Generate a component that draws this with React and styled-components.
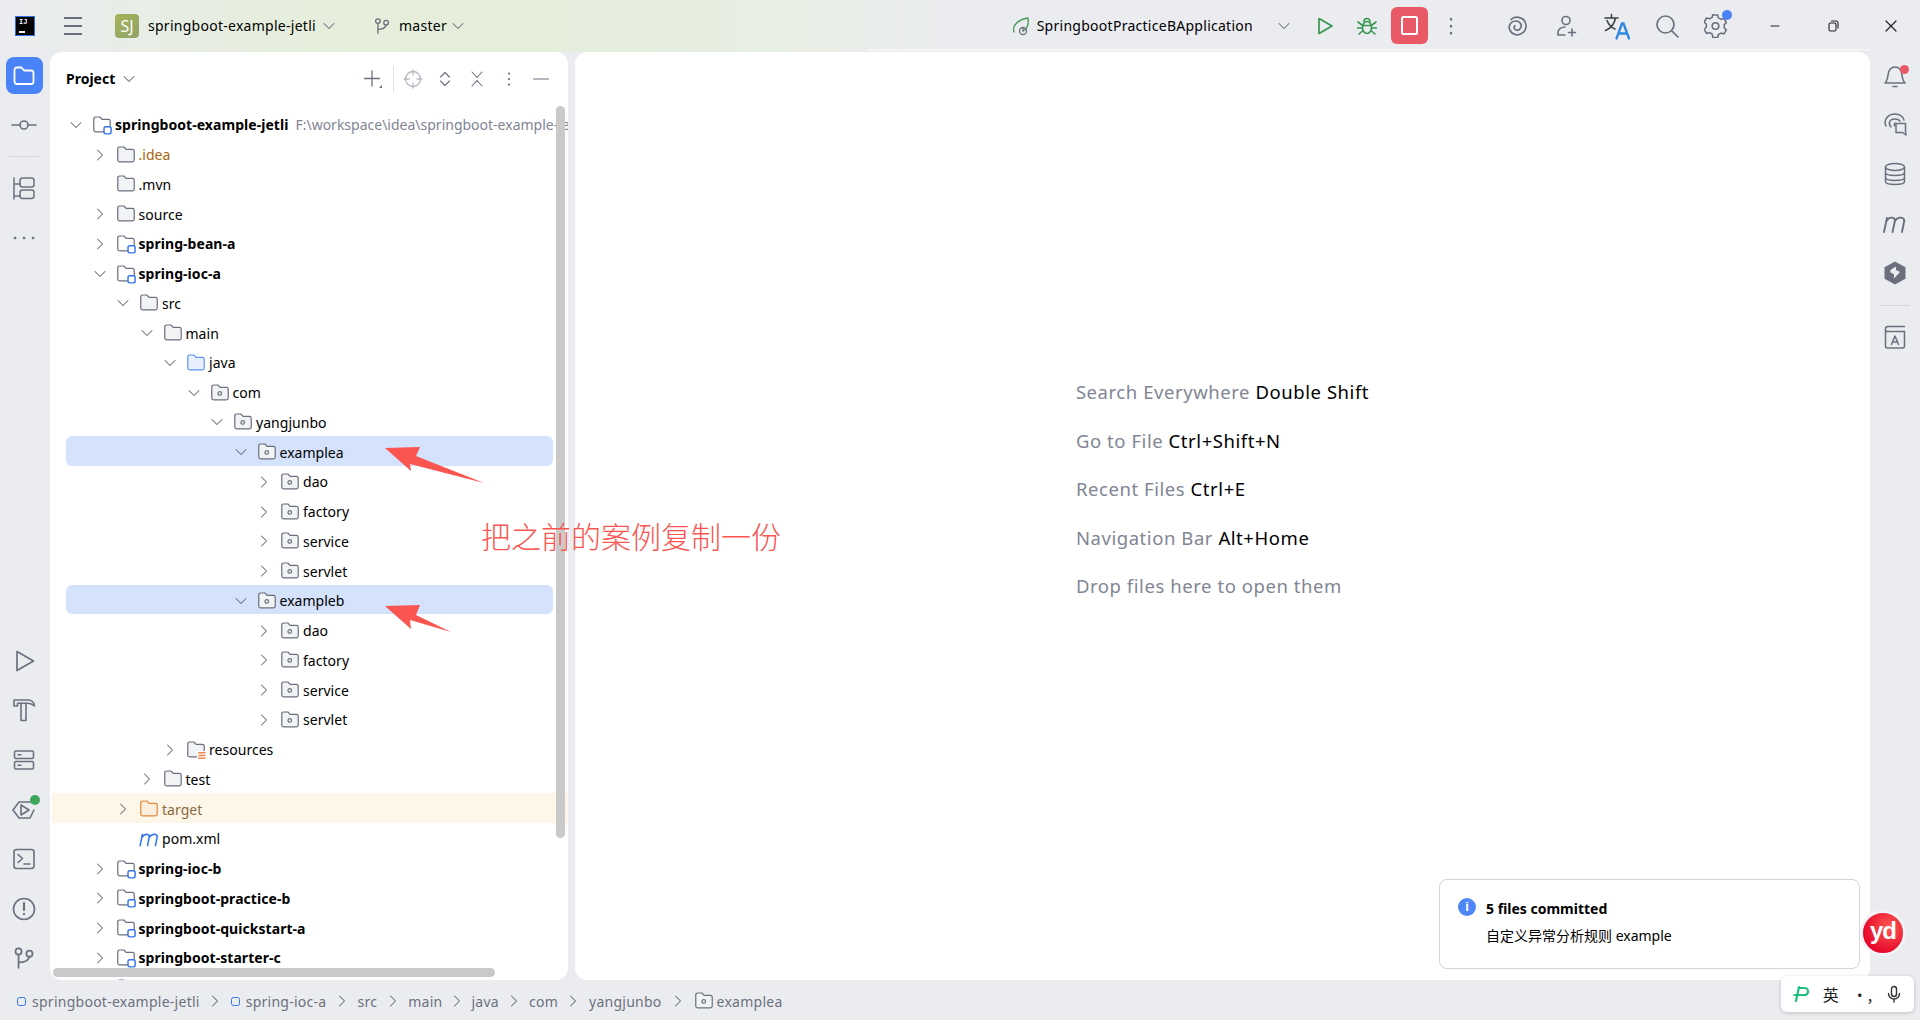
import React from "react";
import styled, { createGlobalStyle } from "styled-components";

const Global = createGlobalStyle`
  html, body { margin: 0; padding: 0; height: 100%; background: #ebecf0; overflow: hidden; }
  #root { height: 100%; }
`;

const UI = `"Noto Sans", "Noto Sans CJK SC", sans-serif`;
const GREY = "#6c707e";

const Frame = styled.div`
  position: relative;
  width: 1920px;
  height: 1020px;
  display: flex;
  flex-direction: column;
  background: #ebecf0;
  font-family: ${UI};
  color: #000;
  overflow: hidden;
`;

/* top bar */
const TopBar = styled.header`
  height: 52px;
  flex: none;
  display: flex;
  align-items: center;
  justify-content: space-between;
  background:
    linear-gradient(#f5f6f8, #f5f6f8) no-repeat 867px 49px / 1003px 1.5px,
    linear-gradient(90deg, #ebecf0 0, #e6eedd 14%, #e5eeda 26%, #e8efe3 40%, #ebecf0 50%);
  padding-bottom: 1px;
  box-sizing: border-box;
`;
const TopGroup = styled.div`
  display: flex;
  align-items: center;
`;
const Logo = styled.div`
  width: 20px;
  height: 20px;
  margin-left: 15px;
  box-sizing: border-box;
  background: #000;
  border: 1px solid #2f6fe0;
  color: #fff;
  font: 700 7px/8px "Liberation Mono", monospace;
  padding: 1px 0 0 3px;
  position: relative;
  &::after { content: ""; position: absolute; left: 3px; bottom: 2px; width: 6px; height: 1.5px; background: #fff; }
`;
const MenuSlot = styled.div`
  margin-left: 28px;
  width: 20px;
  height: 20px;
  display: flex;
`;
const ProjectBadge = styled.div`
  width: 24px;
  height: 24px;
  margin-left: 32px;
  border-radius: 4px;
  background: linear-gradient(135deg, #a6b257, #8fa46b);
  color: #fff;
  font-size: 16px;
  line-height: 24px;
  text-align: center;
`;
const TopText = styled.span`
  font-size: 14px;
  margin-left: ${p => p.$ml || 0}px;
  white-space: nowrap;
  letter-spacing: 0.27px;
`;
const Slot = styled.div`
  width: ${p => p.$w || 50}px;
  height: 36px;
  display: flex;
  align-items: center;
  justify-content: center;
  margin-left: ${p => p.$ml || 0}px;
  position: relative;
`;
const StopButton = styled.div`
  width: 37px;
  height: 37px;
  margin-left: 12px;
  border-radius: 6px;
  background: #e95865;
  display: flex;
  align-items: center;
  justify-content: center;
  &::after { content: ""; width: 13px; height: 15px; border: 2px solid #fff; border-radius: 2.5px; }
`;
const Dot = styled.span`
  position: absolute;
  width: ${p => p.$s || 8}px;
  height: ${p => p.$s || 8}px;
  border-radius: 50%;
  background: ${p => p.$c};
  top: ${p => p.$t}px;
  right: ${p => p.$r}px;
`;

/* middle */
const Middle = styled.div`
  flex: 1;
  min-height: 0;
  display: flex;
`;
const Stripe = styled.nav`
  width: 50px;
  flex: none;
  display: flex;
  flex-direction: column;
  justify-content: space-between;
  padding-right: ${p => p.$pr || 0}px;
  box-sizing: border-box;
`;
const StripeGroup = styled.div`
  display: flex;
  flex-direction: column;
  align-items: center;
  margin-bottom: ${p => p.$mb || 0}px;
`;
const StripeBtn = styled.div`
  width: 37px;
  height: ${p => p.$h || 49.6}px;
  flex: none;
  display: flex;
  align-items: center;
  justify-content: center;
  position: relative;
`;
const ActiveBtn = styled.div`
  width: 37px;
  height: 37px;
  margin: 5px 0 6px;
  border-radius: 8px;
  background: #4a83f7;
  display: flex;
  align-items: center;
  justify-content: center;
`;
const StripeSep = styled.div`
  width: 30px;
  height: 1px;
  margin-top: ${p => p.$mt || 0}px;
  background: #d3d5db;
  flex: none;
`;

const Panel = styled.section`
  width: 518px;
  flex: none;
  background: #fff;
  border-radius: 12px;
  position: relative;
  overflow: hidden;
`;
const PanelHead = styled.div`
  height: 54px;
  display: flex;
  align-items: center;
  padding-left: 16px;
  padding-bottom: 1px;
  box-sizing: border-box;
`;
const PanelTitle = styled.span`
  font-size: 14px;
  font-weight: 700;
  width: 49px;
  white-space: nowrap;
`;
const HeadSlot = styled.div`
  width: 32px;
  height: 24px;
  margin-left: ${p => p.$ml || 0}px;
  display: flex;
  align-items: center;
  justify-content: center;
  position: relative;
`;
const HeadSep = styled.div`
  width: 1px;
  height: 26px;
  margin: 0 6px 0 9px;
  background: #dfe1e5;
`;
const Tree = styled.div`
  padding-top: 2.5px;
`;
const Row = styled.div`
  position: relative;
  height: 29.75px;
  box-sizing: border-box;
  padding: 3px 0 0 ${p => 18 + p.$depth * 23.5}px;
  display: flex;
  align-items: center;
  white-space: nowrap;
  &::before {
    content: "";
    display: ${p => (p.$tone ? "block" : "none")};
    position: absolute;
    top: 0;
    bottom: 0;
    left: ${p => (p.$tone === "band" ? 2 : 16)}px;
    right: ${p => (p.$tone === "band" ? 0 : 15)}px;
    border-radius: ${p => (p.$tone === "band" ? 0 : 6)}px;
    background: ${p => (p.$tone === "band" ? "#fef7e9" : "#d4e2fc")};
  }
`;
const ChevCell = styled.span`
  position: relative;
  width: 16px;
  height: 16px;
  margin-right: 8px;
  flex: none;
  display: flex;
`;
const IconCell = styled.span`
  position: relative;
  width: 20px;
  height: 20px;
  flex: none;
  margin-right: 3px;
  display: flex;
`;
const Label = styled.span`
  position: relative;
  font-size: 14px;
  letter-spacing: ${p => (p.$bold ? 0.05 : 0.03)}px;
  font-weight: ${p => (p.$bold ? 700 : 400)};
  color: ${p => p.$color || "#000"};
`;
const PathNote = styled.span`
  position: relative;
  font-size: 14px;
  color: #818594;
  margin-left: 7px;
`;
const VScroll = styled.div`
  position: absolute;
  left: 506px;
  top: 54px;
  width: 9px;
  height: 732px;
  border-radius: 5px;
  background: #c9c9c9;
`;
const HScroll = styled.div`
  position: absolute;
  left: 3px;
  top: 916px;
  width: 442px;
  height: 9px;
  border-radius: 5px;
  background: #c9c9c9;
`;

const Editor = styled.main`
  flex: 1;
  margin-left: 7px;
  background: #fff;
  border-radius: 12px;
  display: flex;
  align-items: center;
  justify-content: center;
  padding-bottom: 54px;
  box-sizing: border-box;
  position: relative;
`;
const Hints = styled.div`
  display: flex;
  flex-direction: column;
  gap: 21px;
`;
const Hint = styled.div`
  font-size: 18.5px;
  letter-spacing: 0.56px;
  line-height: 27.5px;
  color: #818594;
  white-space: nowrap;
`;
const Key = styled.span`
  color: #000;
`;
const Note = styled.div`
  position: absolute;
  left: 864px;
  top: 827px;
  width: 421px;
  height: 90px;
  box-sizing: border-box;
  background: #fff;
  border: 1px solid #d3d5db;
  border-radius: 8px;
  padding: 19px 0 0 46px;
`;
const NoteInfo = styled.div`
  position: absolute;
  left: 18px;
  top: 18px;
  width: 18px;
  height: 18px;
  border-radius: 50%;
  background: #4f87f7;
  color: #fff;
  font: 700 13px/18px "Liberation Sans", sans-serif;
  text-align: center;
`;
const NoteTitle = styled.div`
  font-size: 14px;
  font-weight: 700;
  line-height: 20px;
`;
const NoteBody = styled.div`
  font-size: 14px;
  line-height: 20px;
  margin-top: 7px;
`;

/* status */
const StatusBar = styled.footer`
  height: 40px;
  flex: none;
  display: flex;
  align-items: center;
  padding: 2px 0 0 17px;
  box-sizing: border-box;
  font-size: 14px;
  color: ${GREY};
`;
const Crumb = styled.span`
  display: flex;
  align-items: center;
  white-space: nowrap;
  letter-spacing: 0.26px;
`;
const Square = styled.span`
  width: 7px;
  height: 7px;
  border: 1.5px solid #3574f0;
  border-radius: 2.5px;
  margin-right: 6px;
  box-sizing: content-box;
`;
const CrumbGap = styled.span`
  width: ${p => p.$w || 31}px;
  display: flex;
  justify-content: center;
`;

/* overlays */
const Yd = styled.div`
  position: absolute;
  left: 1860px;
  top: 910px;
  width: 46px;
  height: 46px;
  box-sizing: border-box;
  border: 3px solid #f3f3f7;
  border-radius: 50%;
  background: radial-gradient(circle at 65% 35%, #fb5a52, #e8082b 70%);
  color: #fff;
  font: 700 24px/36px "Liberation Sans", sans-serif;
  letter-spacing: -1px;
  text-align: center;
`;
const Ime = styled.div`
  position: absolute;
  left: 1781px;
  top: 976px;
  width: 133px;
  height: 36px;
  background: #fff;
  border-radius: 6px;
  box-shadow: 0 1px 4px rgba(0, 0, 0, 0.18);
  display: flex;
  align-items: center;
  justify-content: space-around;
  padding: 0 4px;
  box-sizing: border-box;
  font: 16px "Noto Sans CJK SC", sans-serif;
  color: #222;
`;
const Annotation = styled.div`
  position: absolute;
  left: 481px;
  top: 513px;
  font: 300 30px/44px "Noto Sans CJK SC", sans-serif;
  color: #fb5551;
  white-space: nowrap;
`;
const ArrowLayer = styled.svg`
  position: absolute;
  left: 0;
  top: 0;
  width: 1920px;
  height: 1020px;
  pointer-events: none;
`;

/* icons */
const Svg = ({ s = 22, vb = 22, c = GREY, w = 1.6, children, fill = "none" }) => (
  <svg width={s} height={s} viewBox={`0 0 ${vb} ${vb}`} fill={fill} stroke={c} strokeWidth={w} strokeLinecap="round" strokeLinejoin="round">
    {children}
  </svg>
);
const Chev = ({ open, c = GREY, s = 16 }) => (
  <Svg s={s} vb={16} c={c} w={1.05}>
    <path d={open ? "M3 5.5l5 5 5-5" : "M5.5 3l5 5-5 5"} />
  </Svg>
);
const FOLDER = "M1.6 3.4A1.6 1.6 0 0 1 3.2 1.8h3.9l2 2.2h5.7a1.6 1.6 0 0 1 1.6 1.6v8a1.6 1.6 0 0 1-1.6 1.6H3.2a1.6 1.6 0 0 1-1.6-1.6z";
const TreeIcon = ({ kind }) => {
  if (kind === "maven")
    return (
      <Svg s={20} vb={18} c="#3574f0" w={1.4}>
        <path d="M1 15L3 5M2.700 7.500C4.500 4.300 9 3.800 9.300 6.800L7.700 15M9.300 7.500C11 4.300 16 3.800 16.400 6.800L14.800 15" />
      </Svg>
    );
  const map = {
    plain: ["#f2f3f5", GREY],
    module: ["#fff", GREY],
    pkg: ["#f2f3f5", GREY],
    src: ["#e7effd", "#5f95f2"],
    res: ["#f2f3f5", GREY],
    target: ["#fdeee0", "#e08a3c"],
  };
  const [f, st] = map[kind];
  return (
    <Svg s={20} vb={18} c={st} w={1.1}>
      <path d={FOLDER} fill={f} />
      {kind === "pkg" && <circle cx="8.8" cy="9.4" r="1.6" />}
      {kind === "module" && <rect x="10.8" y="10.6" width="6.4" height="6.4" rx="1.6" fill="#fff" stroke="#3574f0" strokeWidth="1.3" />}
      {kind === "res" && (
        <g stroke="#ed864a" strokeWidth="1.3" strokeLinecap="butt">
          <rect x="10" y="10" width="8" height="8" fill="#fff" stroke="none" />
          <path d="M11 11.5h6.5M11 14h6.5M11 16.5h6.5" />
        </g>
      )}
    </Svg>
  );
};

const rows = [
  { d: 0, open: true, k: "module", t: "springboot-example-jetli", b: true, path: "F:\\workspace\\idea\\springboot-example-jetli" },
  { d: 1, open: false, k: "plain", t: ".idea", c: "#a8660c" },
  { d: 1, k: "plain", t: ".mvn" },
  { d: 1, open: false, k: "plain", t: "source" },
  { d: 1, open: false, k: "module", t: "spring-bean-a", b: true },
  { d: 1, open: true, k: "module", t: "spring-ioc-a", b: true },
  { d: 2, open: true, k: "plain", t: "src" },
  { d: 3, open: true, k: "plain", t: "main" },
  { d: 4, open: true, k: "src", t: "java" },
  { d: 5, open: true, k: "pkg", t: "com" },
  { d: 6, open: true, k: "pkg", t: "yangjunbo" },
  { d: 7, open: true, k: "pkg", t: "examplea", tone: "sel" },
  { d: 8, open: false, k: "pkg", t: "dao" },
  { d: 8, open: false, k: "pkg", t: "factory" },
  { d: 8, open: false, k: "pkg", t: "service" },
  { d: 8, open: false, k: "pkg", t: "servlet" },
  { d: 7, open: true, k: "pkg", t: "exampleb", tone: "sel" },
  { d: 8, open: false, k: "pkg", t: "dao" },
  { d: 8, open: false, k: "pkg", t: "factory" },
  { d: 8, open: false, k: "pkg", t: "service" },
  { d: 8, open: false, k: "pkg", t: "servlet" },
  { d: 4, open: false, k: "res", t: "resources" },
  { d: 3, open: false, k: "plain", t: "test" },
  { d: 2, open: false, k: "target", t: "target", tone: "band", c: "#8a6a3c" },
  { d: 2, k: "maven", t: "pom.xml" },
  { d: 1, open: false, k: "module", t: "spring-ioc-b", b: true },
  { d: 1, open: false, k: "module", t: "springboot-practice-b", b: true },
  { d: 1, open: false, k: "module", t: "springboot-quickstart-a", b: true },
  { d: 1, open: false, k: "module", t: "springboot-starter-c", b: true },
  { d: 1, open: false, k: "module", t: "" },
];

const crumbs = [
  ["springboot-example-jetli", true, 31],
  ["spring-ioc-a", true, 31],
  ["src", false, 31],
  ["main", false, 29],
  ["java", false, 30],
  ["com", false, 31],
  ["yangjunbo", false, 32],
];

const BranchIcon = ({ s = 22 }) => (
  <Svg s={s}>
    <circle cx="6" cy="5" r="2.8" />
    <circle cx="16" cy="7" r="2.8" />
    <path d="M6 8v12M6 15c6 0 9-2 10-5" />
  </Svg>
);

export default function App() {
  return (
    <Frame>
      <Global />
      <TopBar>
        <TopGroup>
          <Logo>IJ</Logo>
          <MenuSlot>
            <Svg s={20} vb={20} w={1.8}>
              <path d="M1 2h18M1 10h18M1 18h18" strokeLinecap="butt" />
            </Svg>
          </MenuSlot>
          <ProjectBadge>SJ</ProjectBadge>
          <TopText $ml={9}>springboot-example-jetli</TopText>
          <Slot $w={16} $ml={5}><Chev open /></Slot>
          <Slot $w={18} $ml={36}><BranchIcon s={18} /></Slot>
          <TopText $ml={8}>master</TopText>
          <Slot $w={16} $ml={3}><Chev open /></Slot>
        </TopGroup>
        <TopGroup>
          <Slot $w={20}>
            <Svg s={20} vb={20} c="#3f9a52" w={1.3}>
              <path d="M3 16C1 10 6 4 17 2c1 7-1 11-5 13" />
              <circle cx="12" cy="15" r="3.5" stroke={GREY} />
              <path d="M12 12v3" stroke={GREY} />
            </Svg>
          </Slot>
          <TopText $ml={6}>SpringbootPracticeBApplication</TopText>
          <Slot $w={16} $ml={23}><Chev open /></Slot>
          <Slot $w={20} $ml={23}>
            <Svg s={20} vb={20} c="#369650" w={1.7}><path d="M4 2.5L17 10 4 17.5z" /></Svg>
          </Slot>
          <Slot $w={24} $ml={20}>
            <Svg s={22} c="#369650" w={1.6}>
              <ellipse cx="11" cy="12.5" rx="4.5" ry="6" />
              <path d="M8 6.5a3 3 0 0 1 6 0M2 7l4 3M20 7l-4 3M1.5 13h5M20.5 13h-5M3 19l3.5-3M19 19l-3.5-3M6.5 10.5h9" />
            </Svg>
          </Slot>
          <StopButton />
          <Slot $w={28} $ml={9}>
            <Svg s={20} vb={20}><path d="M10 3v.4M10 10v.4M10 17v.4" strokeWidth="2.4" /></Svg>
          </Slot>
          <Slot $ml={27}>
            <Svg s={24} vb={24} w={1.7}>
              <path d="M6 5.5C10 1.5 20 2.5 21 11c.7 7-6 11-11 9.500-5-1.500-7.500-7-4.500-11 2.500-3.500 9-3.500 10.500 1 1 3.500-2 6.500-5 5.500-2-.7-2.500-3-1-4.300" />
            </Svg>
          </Slot>
          <Slot>
            <Svg s={24} vb={24} w={1.6}>
              <circle cx="11" cy="6.500" r="4" />
              <path d="M3 21v-2.500c0-3 3-5.500 7-5.500M3 21h7M17 15v7M13.500 18.500h7" />
            </Svg>
          </Slot>
          <Slot>
            <Svg s={28} vb={28} w={1.6} c="#3f4148">
              <path d="M2 6h13M8.500 2.500V6M12.500 6C11.500 12 7 16.500 2.500 18.500M4 8.500c1.500 4 4.500 7 8 8.500" />
              <path d="M13.500 26.500L19 11.500h1.500L26 26.500M15.500 21.500h8.500" stroke="#2f86e0" strokeWidth="2.300" strokeLinejoin="miter" />
            </Svg>
          </Slot>
          <Slot>
            <Svg s={24} vb={24} w={1.7}>
              <circle cx="10.500" cy="10.500" r="8.500" />
              <path d="M16.800 16.800L23 23" />
            </Svg>
          </Slot>
          <Slot $w={48}>
            <Svg s={24} vb={24} w={1.6}>
              <path d="M9.500 2.500h5l.7 3 2.700 1.500 3-.9 2.400 4.200-2.200 2.200v3l2.200 2.200-2.400 4.200-3-.9-2.700 1.500-.7 3h-5" transform="translate(-.5 -1.500) scale(.98)" />
              <path d="M9.500 2l-.7 3-2.700 1.500-3-.9-2.400 4.200 2.200 2.200v3L.700 17.200l2.400 4.200 3-.9 2.700 1.500.7 3" transform="translate(-.5 -1.500) scale(.98)" />
              <circle cx="11.500" cy="12" r="3.300" />
            </Svg>
            <Dot $c="#4a83f7" $s={10} $t={2} $r={8} />
          </Slot>
          <Slot $w={58} $ml={6}>
            <Svg s={14} vb={14} c="#222" w={1.2}><path d="M3 7h8" /></Svg>
          </Slot>
          <Slot $w={58}>
            <Svg s={14} vb={14} c="#222" w={1.1}>
              <rect x="3" y="4" width="7" height="8" rx="1.500" />
              <path d="M5.500 2h4.500a2 2 0 0 1 2 2v5" />
            </Svg>
          </Slot>
          <Slot $w={58}>
            <Svg s={16} vb={16} c="#222" w={1.2}><path d="M3 3l10 10M13 3L3 13" /></Svg>
          </Slot>
        </TopGroup>
      </TopBar>

      <Middle>
        <Stripe $pr={2}>
          <StripeGroup>
            <ActiveBtn>
              <Svg s={24} vb={24} c="#fff" w={1.8}>
                <path d="M2.500 6a2.500 2.500 0 0 1 2.500-2.500h4.500l2.500 3h7a2.500 2.500 0 0 1 2.500 2.500v8.500a2.500 2.500 0 0 1-2.500 2.500H5a2.500 2.500 0 0 1-2.500-2.500z" />
              </Svg>
            </ActiveBtn>
            <StripeBtn $h={50}>
              <Svg s={26} vb={26} w={1.6}>
                <circle cx="13" cy="13" r="4" />
                <path d="M1 13h8M17 13h8" />
              </Svg>
            </StripeBtn>
            <StripeSep $mt={6} />
            <StripeBtn $h={62}>
              <Svg s={24} vb={24} w={1.5}>
                <path d="M2 2v21M2 8h6M2 20h6" />
                <rect x="8" y="2" width="14" height="9" rx="2.500" />
                <rect x="8" y="14" width="14" height="8.500" rx="2.500" />
              </Svg>
            </StripeBtn>
            <StripeBtn $h={38}>
              <Svg s={24} vb={24} w={2.600}>
                <path d="M3 12h.1M12 12h.1M21 12h.1" />
              </Svg>
            </StripeBtn>
          </StripeGroup>
          <StripeGroup $mb={-3}>
            <StripeBtn>
              <Svg s={24} vb={24} w={1.7}><path d="M5 2.500L21.500 12 5 21.500z" /></Svg>
            </StripeBtn>
            <StripeBtn>
              <Svg s={26} vb={26} w={1.6}>
                <path d="M3 3h14c3.500 0 6 2.500 6.500 6-2-1.800-4.300-2.800-6.500-2.800H6.500V9H3z" />
                <path d="M10 6.200V23.500h5V6.200" />
              </Svg>
            </StripeBtn>
            <StripeBtn>
              <Svg s={24} vb={24} w={1.6}>
                <rect x="2.500" y="3" width="19" height="7.500" rx="1.500" />
                <rect x="2.500" y="13.500" width="19" height="7.500" rx="1.500" />
                <path d="M6 6.700h3M6 17.200h3" />
              </Svg>
            </StripeBtn>
            <StripeBtn>
              <Svg s={26} vb={26} w={1.6}>
                <path d="M19.500 6H8L2 14l6 8h11l4-8" />
                <path d="M10 9v10l8-5z" />
              </Svg>
              <Dot $c="#3fa55a" $s={10} $t={10} $r={3} />
            </StripeBtn>
            <StripeBtn>
              <Svg s={24} vb={24} w={1.6}>
                <rect x="2" y="2.500" width="20" height="19" rx="2.500" />
                <path d="M6 7.500l4.500 4-4.500 4M12 17h6" />
              </Svg>
            </StripeBtn>
            <StripeBtn>
              <Svg s={24} vb={24} w={1.6}>
                <circle cx="12" cy="12" r="10.500" />
                <path d="M12 6v7M12 17v.2" strokeWidth="2.200" />
              </Svg>
            </StripeBtn>
            <StripeBtn>
              <BranchIcon s={24} />
            </StripeBtn>
          </StripeGroup>
        </Stripe>

        <Panel>
          <PanelHead>
            <PanelTitle>Project</PanelTitle>
            <Slot $w={16} $ml={6}><Chev open /></Slot>
            <Slot $w={22} $ml={225}>
              <Svg s={20} vb={20} w={1.3}>
                <path d="M9 2v15M1.500 9.500h15" />
                <path d="M19 16v3h-3z" fill={GREY} stroke="none" />
              </Svg>
            </Slot>
            <HeadSep />
            <Slot $w={20} $ml={3}>
              <Svg s={20} vb={20} c="#b6b9c2" w={1.3}>
                <circle cx="10" cy="10" r="7.500" />
                <path d="M10 1v5M10 14v5M1 10h5M14 10h5" />
              </Svg>
            </Slot>
            <HeadSlot $ml={6}>
              <Svg s={18} vb={18} w={1.1}><path d="M4.500 7l4.500-4.500L13.500 7M4.500 11l4.500 4.500 4.500-4.500" /></Svg>
            </HeadSlot>
            <HeadSlot>
              <Svg s={18} vb={18} w={1.1}><path d="M4 2l5 5.500L14 2M4 16l5-5.500L14 16" /></Svg>
            </HeadSlot>
            <HeadSlot>
              <Svg s={18} vb={18} w={2}><path d="M9 3.500v.2M9 9v.2M9 14.500v.2" /></Svg>
            </HeadSlot>
            <HeadSlot>
              <Svg s={18} vb={18} w={1.200}><path d="M1.500 9h15" /></Svg>
            </HeadSlot>
          </PanelHead>
          <Tree>
            {rows.map((r, i) => (
              <Row key={i} $depth={r.d} $tone={r.tone}>
                <ChevCell>{r.open !== undefined && <Chev open={r.open} />}</ChevCell>
                <IconCell><TreeIcon kind={r.k} /></IconCell>
                <Label $bold={r.b} $color={r.c}>{r.t}</Label>
                {r.path && <PathNote>{r.path}</PathNote>}
              </Row>
            ))}
          </Tree>
          <VScroll />
          <HScroll />
        </Panel>

        <Editor>
          <Hints>
            <Hint>Search Everywhere <Key>Double Shift</Key></Hint>
            <Hint>Go to File <Key>Ctrl+Shift+N</Key></Hint>
            <Hint>Recent Files <Key>Ctrl+E</Key></Hint>
            <Hint>Navigation Bar <Key>Alt+Home</Key></Hint>
            <Hint>Drop files here to open them</Hint>
          </Hints>
          <Note>
            <NoteInfo>i</NoteInfo>
            <NoteTitle>5 files committed</NoteTitle>
            <NoteBody>自定义异常分析规则 example</NoteBody>
          </Note>
        </Editor>

        <Stripe>
          <StripeGroup>
            <StripeBtn $h={47}>
              <Svg s={26} vb={26} w={1.6}>
                <path d="M3 20c2-2 2.500-4 3-8 .6-5 3-8 7-8s6.400 3 7 8c.5 4 1 6 3 8z" />
                <path d="M11 23.500h4" />
              </Svg>
              <Dot $c="#e95865" $s={9} $t={13} $r={5} />
            </StripeBtn>
            <StripeBtn $h={50}>
              <Svg s={26} vb={26} w={1.5}>
                <path d="M4 15C1 9 6 3 13 3c5 0 8.500 3 9 6" />
                <path d="M9 16c-3-3-2-8 4-8 2 0 4 .7 5 2" />
                <path d="M13 15a2 2 0 0 1 0-3" />
                <path d="M14 12.500h9.500v8.500l.5 3-3.500-2.500H14z" />
              </Svg>
            </StripeBtn>
            <StripeBtn $h={50}>
              <Svg s={24} vb={24} w={1.5}>
                <ellipse cx="12" cy="5" rx="9.500" ry="3.500" />
                <path d="M2.500 5v14.500c0 1.800 4 3 9.500 3s9.500-1.200 9.500-3V5M2.500 10.500c0 1.800 4 3 9.500 3s9.500-1.200 9.500-3M2.500 15.500c0 1.800 4 3 9.500 3s9.500-1.200 9.500-3" />
              </Svg>
            </StripeBtn>
            <StripeBtn $h={49}>
              <Svg s={26} vb={26} w={1.900}>
                <path d="M2 21L5 7M4.500 10C6.800 6 12.500 5.300 13 9.500L10.500 21M13 10C15.300 6 21.500 5.300 22.300 9.500L20 21" />
              </Svg>
            </StripeBtn>
            <StripeBtn $h={49}>
              <Svg s={26} vb={26} c={GREY} w={0} fill={GREY}>
                <path fillRule="evenodd" d="M13 1.500l10.500 5.700v11.600L13 24.500 2.500 18.800V7.200zM9 9.500l5-3v3.500l4 2-6 6.500v-4l-4-2.500z" />
              </Svg>
            </StripeBtn>
            <StripeSep $mt={8} />
            <StripeBtn $h={62}>
              <Svg s={26} vb={26} w={1.500}>
                <path d="M3.500 5V22a2 2 0 0 0 2 2h15a2 2 0 0 0 2-2V7.500H5.500A2 2 0 0 1 3.500 5zm0 0a2.500 2.500 0 0 1 2.500-2.500h16.500" />
                <path d="M9.500 20.500l3.500-8.500 3.500 8.500M10.700 18h4.600" />
              </Svg>
            </StripeBtn>
          </StripeGroup>
        </Stripe>
      </Middle>

      <StatusBar>
        {crumbs.map(([t, mod, w]) => (
          <React.Fragment key={t}>
            <Crumb>{mod && <Square />}{t}</Crumb>
            <CrumbGap $w={w}><Chev /></CrumbGap>
          </React.Fragment>
        ))}
        <Crumb>
          <IconCell><TreeIcon kind="pkg" /></IconCell>
          examplea
        </Crumb>
      </StatusBar>

      <Yd>yd</Yd>
      <Ime>
        <Svg s={18} vb={18} c="#1fc07f" w={2.200}>
          <path d="M7 2L4 16M8 3h5a3.500 3.500 0 0 1-1 7H2.500" />
        </Svg>
        <span>英</span>
        <span>·,</span>
        <Svg s={18} vb={18} c="#333" w={1.400}>
          <rect x="6.500" y="1.500" width="5" height="10" rx="2.500" />
          <path d="M3.500 8.500a5.500 5.500 0 0 0 11 0M9 14v3" />
        </Svg>
      </Ime>
      <Annotation>把之前的案例复制一份</Annotation>
      <ArrowLayer viewBox="0 0 1920 1020">
        <polygon points="385,448 420,447 416,456 484,483 410,464 411,471" fill="#fb5551" />
        <polygon points="385,606 420,605 416,615 451,632 410,620 411,629" fill="#fb5551" />
      </ArrowLayer>
    </Frame>
  );
}
